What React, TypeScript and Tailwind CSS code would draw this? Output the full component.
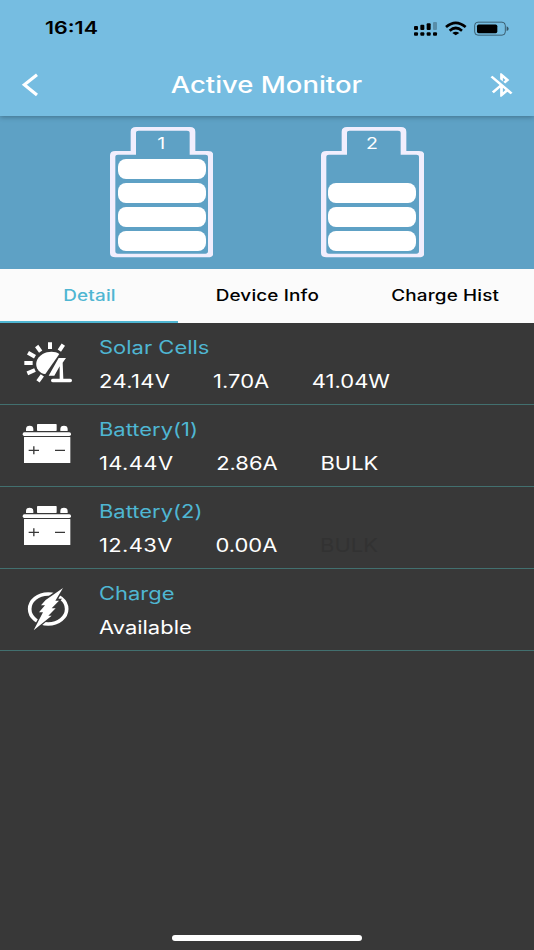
import React from "react";

interface Reading {
  title: string;
  values: { text: string; dim?: boolean }[];
  icon: React.ReactNode;
}

const SunIcon = () => (
  <svg viewBox="0 -21 240 243" className="h-[81px] w-20" fill="#fff">
    <path d="M148 72 C136 63 114 63 98 72 C78 84 73 105 85 121 C91 129 100 133 106 132 Z" />
    <path
      d="M120 37V57M160 44L148 62M80 48L92 65M54 68L75 80M43 99H68M52 130L75 120M97 136L84 154"
      stroke="#fff"
      strokeWidth="12"
    />
    <path d="M146 84 L168 84 L158 98 L160 146 H181 Q186 146 186 151.500 Q186 157 181 157 H128 Q123 157 123 151.500 Q123 146 128 146 H149 V109 L133 137 L116 137 Z" />
  </svg>
);

const CarBatteryIcon = () => (
  <svg viewBox="0 -15 240 243" className="h-[81px] w-20" fill="#fff">
    <path d="M48 63V57Q48 47 59 47Q70 47 70 57V63ZM151 63V57Q151 47 162 47Q173 47 173 57V63Z" />
    <rect x="81" y="42" width="59" height="21" rx="2" />
    <rect x="38" y="67" width="145" height="11" rx="5" />
    <rect x="42" y="81" width="139" height="78" rx="1" />
    <path
      d="M56 121H87M71.500 109V133M135 121H165"
      stroke="#383838"
      strokeWidth="4"
    />
  </svg>
);

const ChargeIcon = () => (
  <svg viewBox="0 -3 240 243" className="h-[81px] w-20" fill="none">
    <ellipse
      cx="114.500"
      cy="117"
      rx="55.500"
      ry="45"
      stroke="#fff"
      strokeWidth="11"
    />
    <path
      d="M160 53L105 91L96 106H107L87 128H99L70 182L124 136H115L136 114H125L146 91H136Z"
      fill="#fff"
      stroke="#383838"
      strokeWidth="9"
    />
    <path
      d="M159 54L107 90L93 106H105L87 127H99L71 181L125 137H115L137 115H125L147 92H136Z"
      fill="#fff"
    />
  </svg>
);

const readings: Reading[] = [
  {
    title: "Solar Cells",
    values: [{ text: "24.14V" }, { text: "1.70A" }, { text: "41.04W" }],
    icon: <SunIcon />,
  },
  {
    title: "Battery(1)",
    values: [{ text: "14.44V" }, { text: "2.86A" }, { text: "BULK" }],
    icon: <CarBatteryIcon />,
  },
  {
    title: "Battery(2)",
    values: [{ text: "12.43V" }, { text: "0.00A" }, { text: "BULK", dim: true }],
    icon: <CarBatteryIcon />,
  },
  {
    title: "Charge",
    values: [{ text: "Available" }],
    icon: <ChargeIcon />,
  },
];

const StatusIcons = () => (
  <svg viewBox="435 58 295 52" className="mt-px h-[17.330px] w-[98.330px]">
    <rect x="441" y="76" width="12" height="12" rx="3" />
    <rect x="460" y="72" width="12" height="16" rx="3" />
    <rect x="479" y="68" width="12" height="20" rx="3" />
    <rect x="498" y="64" width="12" height="24" rx="3" opacity="0.25" />
    {[441, 460, 479, 498].map((x) => (
      <rect key={x} x={x} y="95" width="12" height="10" rx="3" />
    ))}
    <g fill="none" stroke="#000" strokeWidth="8">
      <path d="M537 79Q566 54 596 79" />
      <path d="M548 90Q566 74 585 90" />
    </g>
    <path d="M556 97Q566 89 577 97L566 104Z" />
    <rect
      x="623"
      y="64.500"
      width="92"
      height="39"
      rx="10"
      fill="none"
      stroke="#000"
      strokeOpacity="0.5"
      strokeWidth="3"
    />
    <rect x="630" y="71.500" width="61" height="26" rx="5" />
    <path d="M719 77Q725 79 725 84Q725 89 719 91Z" opacity="0.55" />
  </svg>
);

const BatteryGauge = ({ label, level }: { label: string; level: number }) => (
  <div className="relative h-[130.330px] w-[103.330px]">
    <svg
      viewBox="60 52 310 391"
      className="absolute inset-0 h-full w-full"
      fill="#f1eefd"
    >
      <path
        fillRule="evenodd"
        d="M138 52H300Q316 52 316 66V124H354Q370 124 370 137V430Q370 443 354 443H76Q60 443 60 430V137Q60 124 76 124H122V66Q122 52 138 52ZM138 70V135H84Q76 135 76 142V425Q76 432 84 432H346Q354 432 354 425V142Q354 135 346 135H299V70Q299 63 291 63H146Q138 63 138 70Z"
      />
    </svg>
    <div className="relative flex h-full flex-col justify-end gap-[4.100px] px-[7.800px] pb-[6.400px]">
      <div className="absolute inset-x-0 top-[5px] text-center text-[16px] leading-[22px] text-white">
        <span className="inline-block scale-x-[1.22]">{label}</span>
      </div>
      {Array.from({ length: level }, (_, i) => (
        <div key={i} className="h-5 rounded-[8px] bg-white" />
      ))}
    </div>
  </div>
);

const tabs = ["Detail", "Device Info", "Charge Hist"];

export default function App() {
  return (
    <div className="flex h-[950px] w-[534px] flex-col overflow-hidden bg-[#383838] font-['Inter',sans-serif]">
      <header className="relative z-10 h-[116px] bg-[#76bde1] shadow-[0_1px_5px_rgba(0,0,0,0.3)]">
        <div className="flex h-14 items-center justify-between pr-[23.600px] pl-[45px]">
          <span className="mt-[2px] inline-block origin-left scale-x-[1.260] text-[17px] font-semibold text-black">
            16:14
          </span>
          <StatusIcons />
        </div>
        <div className="flex h-[57px] items-center justify-between pr-[16.500px] pl-5">
          <svg
            viewBox="60 216 60 76"
            className="h-[25.300px] w-5"
            fill="none"
            stroke="#fff"
            strokeWidth="9.500"
          >
            <path d="M111 224L73 254L111 285" />
          </svg>
          <h1 className="ml-[9px] scale-x-[1.220] text-[22.500px] font-medium text-white">
            Active Monitor
          </h1>
          <svg
            viewBox="0 0 24 24"
            preserveAspectRatio="none"
            className="h-7 w-[33px]"
            fill="#fff"
          >
            <path d="M13 5.830l1.880 1.880-1.600 1.600 1.410 1.410 3.020-3.020L12 2h-1v5.030l2 2v-3.200zM5.410 4L4 5.410 10.590 12 5 17.590 6.410 19 11 14.410V22h1l4.290-4.290 2.300 2.290L20 18.590 5.410 4zM13 18.170v-3.760l1.880 1.880L13 18.170z" />
          </svg>
        </div>
      </header>

      <section className="flex h-[153px] gap-[107.300px] bg-[#5ea1c5] pt-[11.300px] pl-[110px]">
        <BatteryGauge label="1" level={4} />
        <BatteryGauge label="2" level={3} />
      </section>

      <nav className="grid h-[54px] grid-cols-3 bg-[#fbfbfb]">
        {tabs.map((tab, i) => (
          <button
            key={tab}
            className={
              i === 0
                ? "border-b-[2.500px] border-[#4fb6d2] text-[15.500px] font-medium text-[#4fb6d2]"
                : "border-b-[2.500px] border-transparent text-[15.500px] font-medium text-black"
            }
          >
            <span className="inline-block scale-x-[1.22] pt-px tracking-[0.120px]">
              {tab}
            </span>
          </button>
        ))}
      </nav>

      <main>
        {readings.map((row) => (
          <div
            key={row.title}
            className="flex h-[82px] border-b border-[#42706f] pl-[10px]"
          >
            {row.icon}
            <div className="ml-[9px] origin-left scale-x-[1.22] pt-[11px] text-[18px] leading-[27px]">
              <div className="text-[#4fb6d2]">{row.title}</div>
              <div className="mt-[7px] flex gap-[35px]">
                {row.values.map((v, i) => (
                  <span
                    key={v.text}
                    className={
                      v.dim
                        ? "text-[#323232]"
                        : i === 0 && row.values.length > 1
                          ? "tracking-[0.300px] text-white"
                          : "text-white"
                    }
                  >
                    {v.text}
                  </span>
                ))}
              </div>
            </div>
          </div>
        ))}
      </main>

      <div className="mt-auto mb-[9px] flex justify-center">
        <div className="h-1.5 w-[190px] rounded-full bg-white" />
      </div>
    </div>
  );
}
